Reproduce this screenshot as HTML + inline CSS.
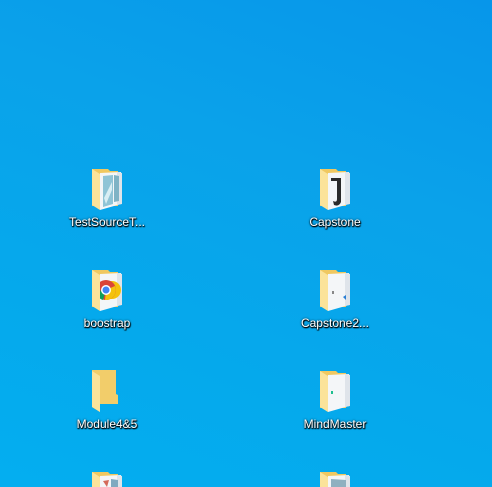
<!DOCTYPE html>
<html style="width:492px;height:487px;overflow:hidden"><head><meta charset="utf-8"><style>
html,body{margin:0;padding:0}
body{width:492px;height:487px;overflow:hidden;position:relative;
background:linear-gradient(200deg,#0796ea 0%,#0aa2ea 35%,#05a9ec 70%,#04aef0 100%);}
.ic{position:absolute;width:32px;height:43px}
.lb{position:absolute;width:110px;text-align:center;color:#fff;font:12px "Liberation Sans",sans-serif;
text-shadow:0 1px 1px #000,1px 1px 1px #000,0 0 2px rgba(0,0,0,.8);white-space:nowrap}
</style></head><body>
<svg width="0" height="0" style="position:absolute">
<defs>
<g id="back"><path d="M1 1 H17 L19 3 H27 V38 H1 Z" fill="#f0c860"/></g>
<g id="flap"><path d="M1 1 L9 6 V42 L1 37 Z" fill="#fbe39a"/></g>
<g id="paper"><path d="M9 5 L30 4 V36 L9 42 Z" fill="#f4f6f8"/><path d="M26 4 L31 5 V36 L26 37 Z" fill="#dfe4ea"/></g>
</defs></svg>

<svg class="ic" style="left:91px;top:168px" viewBox="0 0 32 43"><use href="#back"/><use href="#paper"/>
<path d="M12 8 L22 7 V36 L12 39Z" fill="#8fc4d6"/><path d="M23 7 L28 8 V33 L23 34Z" fill="#7fb3c5"/><path d="M13 30 L21 14 V22 L15 36Z" fill="#d8eef4"/><use href="#flap"/></svg>
<div class="lb" style="left:52px;top:215px">TestSourceT...</div>

<svg class="ic" style="left:319px;top:168px" viewBox="0 0 32 43"><use href="#back"/><use href="#paper"/>
<path d="M12 10 H22 V34 Q20 39 15 37 L14 33 Q18 35 18 31 V13 H12Z" fill="#2a2a2a"/><use href="#flap"/></svg>
<div class="lb" style="left:280px;top:215px">Capstone</div>

<svg class="ic" style="left:91px;top:269px" viewBox="0 0 32 43"><use href="#back"/><use href="#paper"/>
<circle cx="21" cy="21" r="9" fill="#f4c20d"/><circle cx="21" cy="21" r="4" fill="#fff"/>
<circle cx="15" cy="21" r="10" fill="#db4437"/><path d="M15 21 L5 22 A10 10 0 0 0 12 31Z" fill="#0f9d58"/><path d="M15 21 L24 17 A10 10 0 0 1 14 31Z" fill="#f4c20d"/>
<circle cx="15" cy="21" r="5" fill="#fff"/><circle cx="15" cy="21" r="3.5" fill="#4285f4"/><use href="#flap"/></svg>
<div class="lb" style="left:52px;top:316px">boostrap</div>

<svg class="ic" style="left:319px;top:269px" viewBox="0 0 32 43"><use href="#back"/><use href="#paper"/>
<path d="M13 22 h2 v3 h-2z" fill="#888"/><path d="M24 28 l3 -2 v5z" fill="#2a7fd4"/><use href="#flap"/></svg>
<div class="lb" style="left:280px;top:316px">Capstone2...</div>

<svg class="ic" style="left:91px;top:370px" viewBox="0 0 32 43"><path d="M1 0 H25 V24 L27 25 V34 H9 V42 L1 37Z" fill="#f2cd6a"/><use href="#flap"/></svg>
<div class="lb" style="left:52px;top:417px">Module4&amp;5</div>

<svg class="ic" style="left:319px;top:370px" viewBox="0 0 32 43"><use href="#back"/><use href="#paper"/>
<rect x="12" y="21" width="2" height="3" fill="#1fbf8f"/><use href="#flap"/></svg>
<div class="lb" style="left:280px;top:417px">MindMaster</div>

<div style="position:absolute;left:0;top:471px;width:492px;height:16px;overflow:hidden">
<svg class="ic" style="left:91px;top:0" viewBox="0 0 32 43"><use href="#back"/><use href="#paper"/>
<path d="M12 10 L18 9 L16 16Z" fill="#d46a5a"/><path d="M20 8 L27 9 V20 L20 20Z" fill="#7fa9c0"/><use href="#flap"/></svg>
<svg class="ic" style="left:319px;top:0" viewBox="0 0 32 43"><use href="#back"/><use href="#paper"/>
<path d="M12 8 L27 9 V20 L12 20Z" fill="#8fb0c0"/><use href="#flap"/></svg>
</div>
</body></html>
